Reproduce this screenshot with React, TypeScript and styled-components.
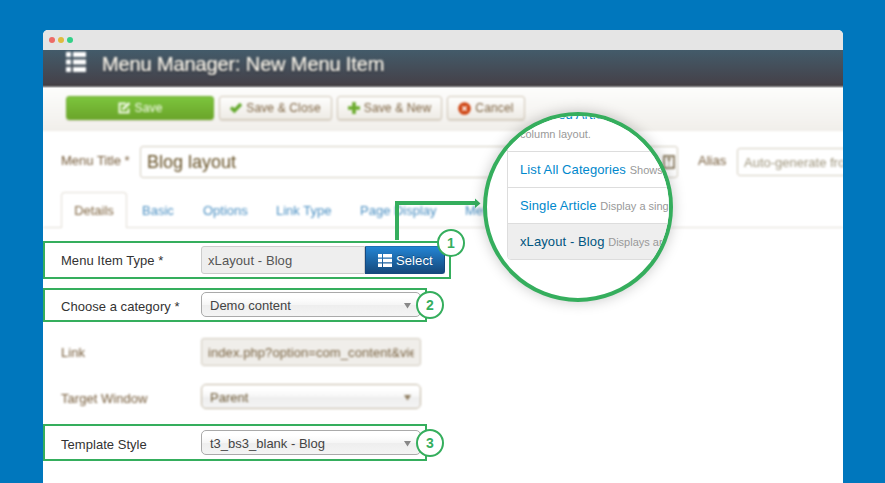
import React from "react";
import styled, { createGlobalStyle, css } from "styled-components";

const GREEN = "#35ae5d";

const GlobalStyle = createGlobalStyle`
  * { box-sizing: border-box; }
  html, body, #root { height: 100%; }
  body {
    margin: 0;
    overflow: hidden;
    background: #0077bd;
    font: 13px/18px "Liberation Sans", Arial, sans-serif;
  }
`;

const Stage = styled.main`
  position: relative;
  height: 483px;
  padding: 30px 42px 0 43px;
  overflow: hidden;
`;

const Browser = styled.section`
  height: 453px;
  background: #fff;
  border-radius: 5px 5px 0 0;
  overflow: hidden;
`;

const Chrome = styled.div`
  display: flex;
  align-items: center;
  gap: 3px;
  height: 20px;
  padding-left: 6px;
  background: #e5e5e5;
`;

const Dot = styled.i<{ $color: string }>`
  width: 6px;
  height: 6px;
  border-radius: 50%;
  background: ${(p) => p.$color};
`;

const soft = css`
  filter: blur(0.8px);
`;

const Header = styled.header`
  display: flex;
  align-items: flex-start;
  height: 38px;
  padding-left: 22px;
  background: linear-gradient(#435b6a, #45424a 33px, #433f43 35px, #8d8b8e 37px, #dcdcdc 38px);
`;

const HeaderIcon = styled.svg`
  ${soft}
  margin-top: 1px;
`;

const Heading = styled.h1`
  ${soft}
  margin: 1px 0 0 15px;
  font-size: 20px;
  line-height: 26px;
  font-weight: 400;
  letter-spacing: -0.13px;
  color: #fffaf0;
  -webkit-text-stroke: 0.2px #fffaf0;
  text-shadow: 0 1px 2px rgba(0, 0, 0, 0.6);
`;

const Toolbar = styled.div`
  ${soft}
  display: flex;
  align-items: flex-start;
  gap: 5px;
  height: 43px;
  margin: 0 -4px;
  padding: 8px 0 0 27px;
  background: linear-gradient(#fdfdfc, #f1efeb);
  border-bottom: 1px solid #eeebe5;
`;

const ToolButton = styled.button<{ $width: number; $primary?: boolean }>`
  display: flex;
  align-items: center;
  justify-content: center;
  gap: 4px;
  width: ${(p) => p.$width}px;
  height: 24px;
  padding: 0;
  font: 12px/16px "Liberation Sans", Arial, sans-serif;
  letter-spacing: 0.15px;
  border-radius: 3px;
  border: 1px solid ${(p) => (p.$primary ? "#70ad30" : "#d0c6b6")};
  color: ${(p) => (p.$primary ? "#fbfff5" : "#7c6240")};
  background: ${(p) => (p.$primary ? "linear-gradient(#7cc53d, #6ba52a)" : "linear-gradient(#fefefd, #eeebe5)")};
  box-shadow: 0 1px 1px rgba(120, 100, 60, 0.2);
`;

const TitleRow = styled.div`
  ${soft}
  display: flex;
  align-items: center;
  width: 860px;
  height: 32px;
  margin-top: 15px;
  color: #745a38;
`;

const TitleLabel = styled.label`
  flex: none;
  width: 97px;
  padding: 0 0 2px 18px;
  font-size: 13px;
  white-space: nowrap;
`;

const TitleInput = styled.div`
  flex: none;
  display: flex;
  align-items: center;
  justify-content: space-between;
  width: 538px;
  height: 32px;
  padding: 0 2px 0 6px;
  border: 1px solid #d2cbbd;
  border-radius: 3px;
  font-size: 18px;
  color: #665126;
`;

const AliasLabel = styled.label`
  flex: none;
  margin: 0 10px 2px 20px;
  width: 29px;
  font-size: 13px;
  white-space: nowrap;
`;

const AliasInput = styled.div`
  flex: none;
  width: 165px;
  height: 28px;
  padding: 5px 6px;
  border: 1px solid #d2cbbd;
  border-radius: 3px;
  font-size: 13px;
  line-height: 17px;
  color: #9f967e;
  white-space: nowrap;
`;

const Tabs = styled.nav`
  ${soft}
  display: flex;
  height: 36px;
  margin-top: 14px;
  padding-left: 18px;
  border-bottom: 1px solid #e2ddd4;
`;

const Tab = styled.a<{ $width: number; $active?: boolean }>`
  width: ${(p) => p.$width}px;
  height: 36px;
  line-height: 38px;
  font-size: 13px;
  white-space: nowrap;
  color: #4a8fc2;
  ${(p) =>
    p.$active &&
    css`
      margin-right: 15px;
      text-align: center;
      color: #7e6440;
      line-height: 36px;
      background: #fff;
      border: 1px solid #e2ddd4;
      border-bottom: 0;
      border-radius: 4px 4px 0 0;
    `}
`;

const Fields = styled.form`
  display: flex;
  flex-direction: column;
  margin-top: 13px;
`;

const Field = styled.div<{ $width?: number; $height: number; $gap?: number; $marked?: boolean; $pad: number }>`
  position: relative;
  display: flex;
  align-items: flex-start;
  width: ${(p) => p.$width ?? 384}px;
  height: ${(p) => p.$height}px;
  margin-top: ${(p) => p.$gap ?? 0}px;
  padding-top: ${(p) => p.$pad}px;
  border: 2px solid ${(p) => (p.$marked ? GREEN : "transparent")};
  color: ${(p) => (p.$marked ? "#333" : "#745a38")};
  ${(p) => !p.$marked && soft}
`;

const FieldLabel = styled.label`
  width: 156px;
  padding: 6px 0 0 16px;
  letter-spacing: 0.04px;
  white-space: nowrap;
`;

const TextBox = styled.div<{ $width: number; $soft?: boolean }>`
  width: ${(p) => p.$width}px;
  height: 28px;
  padding: 5px 6px 3px;
  border: 1px solid ${(p) => (p.$soft ? "#d0c9bb" : "#ccc")};
  border-radius: ${(p) => (p.$soft ? "3px" : "3px 0 0 3px")};
  background: ${(p) => (p.$soft ? "#f0eeea" : "#eee")};
  color: ${(p) => (p.$soft ? "#786241" : "#555")};
  letter-spacing: 0.08px;
  white-space: nowrap;
  overflow: hidden;
`;

const Clip = styled.div`
  width: 206px;
  overflow: hidden;
`;

const SelectButton = styled.button`
  display: flex;
  align-items: center;
  gap: 4px;
  width: 80px;
  height: 28px;
  padding: 1px 0 0 12px;
  border: 1px solid #15497f;
  border-top-color: #1f6fb4;
  border-radius: 0 3px 3px 0;
  background: linear-gradient(#2384d3, #15497c);
  color: #fff;
  font: 13px/18px "Liberation Sans", Arial, sans-serif;
  letter-spacing: 0.1px;
  text-shadow: 0 -1px 0 rgba(0, 0, 0, 0.3);
`;

const Dropdown = styled.div<{ $soft?: boolean }>`
  display: flex;
  align-items: center;
  justify-content: space-between;
  width: 220px;
  height: 25px;
  padding: 2px 9px 0 8px;
  border: 1px solid ${(p) => (p.$soft ? "#bfb49f" : "#aaa")};
  border-radius: 5px;
  background: linear-gradient(#fff 20%, #f6f6f6 50%, #eee 52%, #f4f4f4 100%);
  color: ${(p) => (p.$soft ? "#6b5733" : "#444")};
`;

const Badge = styled.span`
  position: absolute;
  top: 50%;
  right: -19px;
  width: 28px;
  height: 28px;
  margin-top: -14px;
  border: 2px solid ${GREEN};
  border-radius: 50%;
  background: #fff;
  color: ${GREEN};
  font: 700 14px/24px "Liberation Sans", Arial, sans-serif;
  text-align: center;
`;

const CornerBadge = styled(Badge)`
  top: 0;
  right: -16px;
`;

const Connector = styled.svg`
  position: absolute;
  left: 395px;
  top: 196px;
`;

const Lens = styled.aside`
  position: absolute;
  left: 483px;
  top: 112px;
  width: 190px;
  height: 190px;
  border: 4px solid ${GREEN};
  border-radius: 50%;
  background: #fff;
  overflow: hidden;
  box-shadow: 0 0 14px rgba(0, 0, 0, 0.22);
`;

const LensList = styled.div`
  width: 260px;
  margin: -11px 0 0 20px;
  border: 1px solid #ddd;
  border-radius: 4px;
  overflow: hidden;
`;

const LensItem = styled.div<{ $active?: boolean; $first?: boolean }>`
  height: ${(p) => (p.$first ? 45 : 36)}px;
  padding: ${(p) => (p.$first ? 0 : 8)}px 12px 0;
  border-top: ${(p) => (p.$first ? 0 : 1)}px solid #ddd;
  background: ${(p) => (p.$active ? "#eee" : "#fff")};
  color: ${(p) => (p.$active ? "#005580" : "#0088cc")};
  line-height: ${(p) => (p.$first ? 18.5 : 19)}px;
  letter-spacing: 0.1px;
  white-space: nowrap;
`;

const Note = styled.small`
  font-size: 11px;
  letter-spacing: 0;
  color: #999;
`;

const ListIcon = ({ size, color }: { size: number; color: string }) => (
  <svg width={size} height={size} viewBox="0 0 14 14" fill={color}>
    <path d="M0 0h4v3.5H0zM5 0h9v3.5H5zM0 4.7h4v3.5H0zM5 4.7h9v3.5H5zM0 9.4h4v3.5H0zM5 9.4h9v3.5H5z" />
  </svg>
);

const EditIcon = () => (
  <svg width="13" height="12" viewBox="0 0 13 12" fill="none" stroke="#f4fbe9" strokeWidth="2">
    <path d="M8 1.5H1.5v9h9V6.5" />
    <path d="M4.5 7.5 11.5 1" strokeWidth="2.4" />
  </svg>
);

const CheckIcon = () => (
  <svg width="12" height="12" viewBox="0 0 12 12" fill="none" stroke="#62a82b" strokeWidth="3.4">
    <path d="m1 5.5 3.4 3.3L11 2" />
  </svg>
);

const PlusIcon = () => (
  <svg width="12" height="12" viewBox="0 0 12 12" fill="none" stroke="#6bab2c" strokeWidth="3.6">
    <path d="M6 0v12M0 6h12" />
  </svg>
);

const CancelIcon = () => (
  <svg width="13" height="13" viewBox="0 0 13 13">
    <circle cx="6.5" cy="6.5" r="6.3" fill="#cf4412" />
    <path d="m4.3 4.3 4.4 4.4m0-4.4L4.3 8.7" stroke="#fff" strokeWidth="1.5" />
  </svg>
);

const InputIcon = () => (
  <svg width="12" height="14" viewBox="0 0 12 14" fill="none" stroke="#85775a">
    <rect x="1" y="1" width="10" height="12" strokeWidth="1.8" />
    <path d="M6 3.5v4M6 9v1.5M4 3.5h4" strokeWidth="1.5" />
  </svg>
);

const Caret = ({ color = "#888" }: { color?: string }) => (
  <svg width="7" height="6" viewBox="0 0 7 6" fill={color}>
    <path d="M0 0h7L3.5 5.5z" />
  </svg>
);

export default function App() {
  return (
    <>
      <GlobalStyle />
      <Stage>
        <Browser>
          <Chrome>
            <Dot $color="#ed6b67" />
            <Dot $color="#e0bb3e" />
            <Dot $color="#33d087" />
          </Chrome>
          <Header>
            <HeaderIcon width="22" height="22" viewBox="0 0 22 22" fill="#fff">
              <path d="M1 1h5v5H1zM8 1h13v5H8zM1 8.5h5v5H1zM8 8.5h13v5H8zM1 16h5v5H1zM8 16h13v5H8z" />
            </HeaderIcon>
            <Heading>Menu Manager: New Menu Item</Heading>
          </Header>
          <Toolbar>
            <ToolButton $width={148} $primary><EditIcon />Save</ToolButton>
            <ToolButton $width={113}><CheckIcon />Save &amp; Close</ToolButton>
            <ToolButton $width={105}><PlusIcon />Save &amp; New</ToolButton>
            <ToolButton $width={78}><CancelIcon />Cancel</ToolButton>
          </Toolbar>
          <TitleRow>
            <TitleLabel>Menu Title *</TitleLabel>
            <TitleInput>Blog layout<InputIcon /></TitleInput>
            <AliasLabel>Alias</AliasLabel>
            <AliasInput>Auto-generate from title</AliasInput>
          </TitleRow>
          <Tabs>
            <Tab $width={66} $active>Details</Tab>
            <Tab $width={61}>Basic</Tab>
            <Tab $width={73}>Options</Tab>
            <Tab $width={84}>Link Type</Tab>
            <Tab $width={105}>Page Display</Tab>
            <Tab $width={80}>Metadata</Tab>
          </Tabs>
          <Fields>
            <Field $marked $width={408} $height={38} $pad={3}>
              <FieldLabel>Menu Item Type *</FieldLabel>
              <TextBox $width={164}>xLayout - Blog</TextBox>
              <SelectButton type="button"><ListIcon size={14} color="#fff" />Select</SelectButton>
              <CornerBadge>1</CornerBadge>
            </Field>
            <Field $marked $height={34} $gap={9} $pad={2}>
              <FieldLabel>Choose a category *</FieldLabel>
              <Dropdown>Demo content<Caret /></Dropdown>
              <Badge>2</Badge>
            </Field>
            <Field $height={38} $gap={11} $pad={3}>
              <FieldLabel>Link</FieldLabel>
              <TextBox $width={220} $soft><Clip>index.php?option=com_content&amp;view=category</Clip></TextBox>
            </Field>
            <Field $height={34} $gap={9} $pad={2}>
              <FieldLabel>Target Window</FieldLabel>
              <Dropdown $soft>Parent<Caret color="#8d7b5e" /></Dropdown>
            </Field>
            <Field $marked $height={37} $gap={10} $pad={4}>
              <FieldLabel>Template Style</FieldLabel>
              <Dropdown>t3_bs3_blank - Blog<Caret /></Dropdown>
              <Badge>3</Badge>
            </Field>
          </Fields>
        </Browser>
        <Connector width="86" height="45" viewBox="0 0 86 45">
          <path d="M2 44V7h78" fill="none" stroke={GREEN} strokeWidth="4" />
          <path d="M80 2.5 85.5 7.5 80 12z" fill={GREEN} />
        </Connector>
        <Lens>
          <LensList>
            <LensItem $first>Featured Articles<br /><Note>column layout.</Note></LensItem>
            <LensItem>List All Categories <Note>Shows a list of all</Note></LensItem>
            <LensItem>Single Article <Note>Display a single article</Note></LensItem>
            <LensItem $active>xLayout - Blog <Note>Displays articles</Note></LensItem>
          </LensList>
        </Lens>
      </Stage>
    </>
  );
}
